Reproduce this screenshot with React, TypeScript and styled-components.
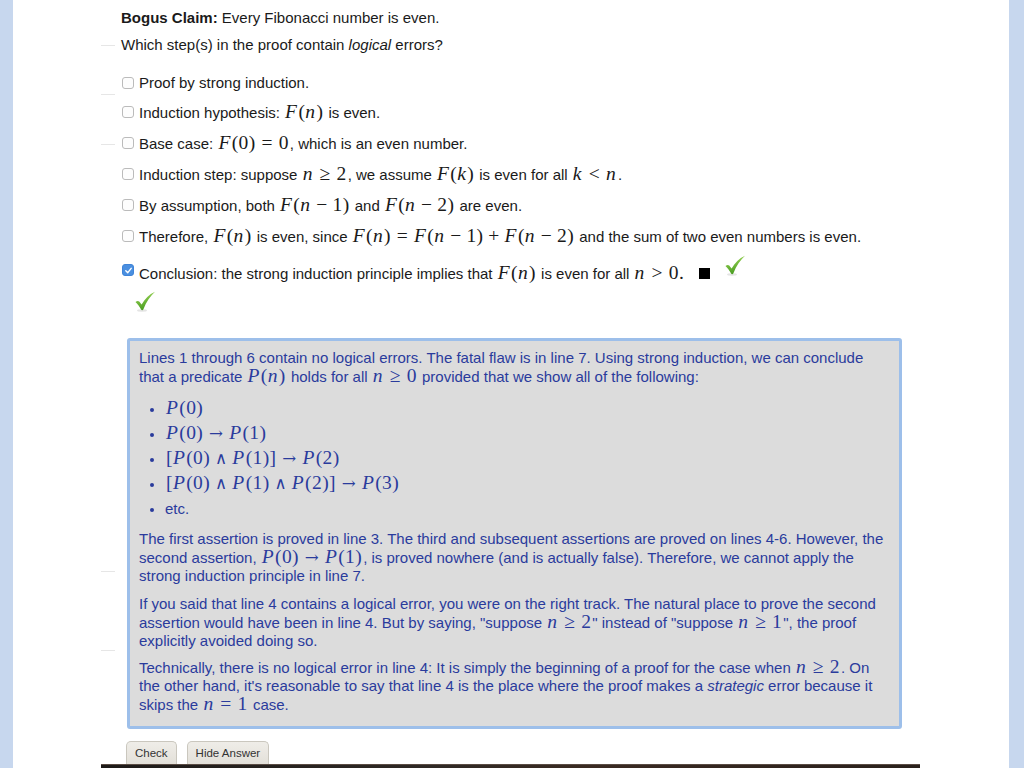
import styled, { createGlobalStyle, css } from "styled-components";
import { ReactNode } from "react";

const GlobalStyle = createGlobalStyle`
  html, body {
    margin: 0;
    padding: 0;
    background: #c7d7ee;
  }
  body {
    font-family: "Liberation Sans", Arial, sans-serif;
    font-size: 15px;
    color: #1a1a1a;
  }
`;

const Page = styled.div`
  margin: 0 15px 0 13px;
  min-height: 768px;
  background: #ffffff;
  padding-left: 88px;
  overflow: hidden;
  box-sizing: border-box;
`;

const Content = styled.div`
  padding-left: 20px;
  width: 790px;
`;

type Mark = { $mark?: [number, number] };

// faint tick marks in the left margin
const withMark = css<Mark>`
  position: relative;
  ${(p) =>
    p.$mark &&
    css`
      &::before {
        content: "";
        position: absolute;
        left: ${-p.$mark[0]}px;
        top: ${p.$mark[1]}px;
        width: 14px;
        border-top: 1px solid #e6e6e6;
      }
    `}
`;

const Claim = styled.p`
  margin: 0;
  padding-top: 8px;
  line-height: 20px;
`;

const Question = styled.p<Mark>`
  ${withMark}
  margin: 7px 0 0;
  line-height: 20px;
`;

const Options = styled.div`
  margin-top: 17px;
  display: flex;
  flex-direction: column;
  gap: 7px;
`;

const Option = styled.label<Mark & { $last?: boolean }>`
  ${withMark}
  display: flex;
  align-items: center;
  line-height: 21px;
  min-height: ${(p) => (p.$last ? 27 : 21)}px;
`;

const Box = styled.span<{ $checked?: boolean }>`
  flex: none;
  width: 12px;
  height: 12px;
  margin: 0 5px 0 1px;
  border-radius: 3px;
  box-sizing: border-box;
  display: inline-flex;
  align-items: center;
  justify-content: center;
  border: 1px solid ${(p) => (p.$checked ? "#3f84d8" : "#bbbbbb")};
  background: ${(p) => (p.$checked ? "#4a8fe0" : "#fdfdfd")};
`;

const M = styled.span`
  font-family: "Liberation Serif", "DejaVu Serif", serif;
  font-size: 1.3em;
  letter-spacing: 0.02em;
  line-height: 24px;
  white-space: nowrap;
  margin: 0 1px;
`;

const V = styled.i`
  font-style: italic;
  padding-right: 0.05em;
`;

const Bin = styled.span`
  margin: 0 0.25em;
`;

const Rel = styled.span`
  margin: 0 0.3em;
`;

const Sym = styled.span`
  font-family: "DejaVu Serif", serif;
  font-size: 0.85em;
  font-weight: 300;
`;

const Qed = styled.span`
  display: inline-block;
  width: 11px;
  height: 11px;
  background: #000;
  margin: 0 14px 0 14px;
`;

const Tick = styled.svg<{ $below?: boolean }>`
  flex: none;
  width: 22px;
  height: 21px;
  ${(p) =>
    p.$below
      ? css`
          display: block;
          margin: 6px 0 0 13px;
        `
      : css`
          vertical-align: 3px;
        `}
`;

const Answer = styled.div`
  margin: 26px 0 0 6px;
  width: 775px;
  box-sizing: border-box;
  border: 3px solid #9dbfea;
  border-radius: 3px;
  background: #dcdcdc;
  color: #2a3b9c;
  padding: 8px 9px 12px;
  line-height: 18px;
  ${M} {
    line-height: 0.9;
  }
`;

const Para = styled.p<Mark & { $gap?: number }>`
  ${withMark}
  margin: 0 0 ${(p) => p.$gap ?? 8}px;
  &:last-child {
    margin-bottom: 0;
  }
`;

const List = styled.ul`
  margin: 10px 0 9px;
  padding-left: 26px;
  list-style: disc;
  li {
    line-height: 25px;
  }
  li::marker {
    font-size: 13px;
  }
`;

const Buttons = styled.div`
  margin: 12px 0 0 5px;
  display: flex;
  gap: 10px;
`;

const Button = styled.button`
  height: 23px;
  padding: 0 8px;
  font-family: "Liberation Sans", Arial, sans-serif;
  font-size: 11.5px;
  color: #333;
  background: linear-gradient(#efede8, #e3e0d9);
  border: 1px solid #cac7be;
  border-bottom: none;
  border-radius: 5px 5px 0 0;
`;

const Film = styled.div`
  width: 819px;
  height: 20px;
  background: linear-gradient(90deg, #1d1a18 0%, #2f2925 40%, #3a2a22 60%, #2a211c 100%);
  border-top: 1px solid #5a4c44;
`;

const SmallCheck = () => (
  <svg width="9" height="9" viewBox="0 0 10 10">
    <path d="M2 5.2 L4.2 7.4 L8 2.6" fill="none" stroke="#fff" strokeWidth="1.6" strokeLinecap="round" strokeLinejoin="round" />
  </svg>
);

const GreenTick = ({ below }: { below?: boolean }) => (
  <Tick $below={below} viewBox="0 0 22 21">
    <defs>
      <linearGradient id={below ? "gb" : "ga"} x1="0" y1="0" x2="0.3" y2="1">
        <stop offset="0" stopColor="#a6dc5c" />
        <stop offset="1" stopColor="#4a9d22" />
      </linearGradient>
    </defs>
    <ellipse cx="8" cy="19.5" rx="5" ry="1.2" fill="#d9d9d9" opacity="0.7" />
    <path
      d="M1.5 11 C3 9.8 4.2 9.6 5.2 10.6 L7.6 13.6 C11 8 15 3.5 21 0.8 C16.5 5 12.2 11 9.3 18.5 C8.8 19.4 7.6 19.4 7.1 18.6 C5.6 15.8 3.8 13.2 1.5 11 Z"
      fill={`url(#${below ? "gb" : "ga"})`}
    />
  </Tick>
);

type Row = { checked?: boolean; mark?: [number, number]; body: ReactNode };

const Fn = ({ arg }: { arg: ReactNode }) => (
  <M>
    <V>F</V>({arg})
  </M>
);

const Arrow = () => (
  <Rel>
    <Sym>→</Sym>
  </Rel>
);

const And = () => (
  <Bin>
    <Sym>∧</Sym>
  </Bin>
);

const rows: Row[] = [
  { mark: [20, 22], body: "Proof by strong induction." },
  {
    body: (
      <>
        Induction hypothesis:&nbsp;<Fn arg={<V>n</V>} />&nbsp;is even.
      </>
    ),
  },
  {
    mark: [20, 13],
    body: (
      <>
        Base case:&nbsp;
        <M>
          <V>F</V>(0)<Rel>=</Rel>0
        </M>
        , which is an even number.
      </>
    ),
  },
  {
    body: (
      <>
        Induction step: suppose&nbsp;
        <M>
          <V>n</V>
          <Rel>≥</Rel>2
        </M>
        , we assume&nbsp;<Fn arg={<V>k</V>} />&nbsp;is even for all&nbsp;
        <M>
          <V>k</V>
          <Rel>&lt;</Rel>
          <V>n</V>
        </M>
        .
      </>
    ),
  },
  {
    body: (
      <>
        By assumption, both&nbsp;
        <Fn
          arg={
            <>
              <V>n</V>
              <Bin>−</Bin>1
            </>
          }
        />
        &nbsp;and&nbsp;
        <Fn
          arg={
            <>
              <V>n</V>
              <Bin>−</Bin>2
            </>
          }
        />
        &nbsp;are even.
      </>
    ),
  },
  {
    body: (
      <>
        Therefore,&nbsp;<Fn arg={<V>n</V>} />&nbsp;is even, since&nbsp;
        <M>
          <V>F</V>(<V>n</V>)<Rel>=</Rel>
          <V>F</V>(<V>n</V>
          <Bin>−</Bin>1)<Bin>+</Bin>
          <V>F</V>(<V>n</V>
          <Bin>−</Bin>2)
        </M>
        &nbsp;and the sum of two even numbers is even.
      </>
    ),
  },
  {
    checked: true,
    body: (
      <>
        Conclusion: the strong induction principle implies that&nbsp;
        <Fn arg={<V>n</V>} />
        &nbsp;is even for all&nbsp;
        <M>
          <V>n</V>
          <Rel>&gt;</Rel>0.
        </M>
        <Qed />
        <GreenTick />
      </>
    ),
  },
];

const P = ({ n }: { n: number | string | ReactNode }) => (
  <>
    <V>P</V>({n})
  </>
);

export default function App() {
  return (
    <>
      <GlobalStyle />
      <Page>
        <Content>
          <Claim>
            <b>Bogus Claim:</b> Every Fibonacci number is even.
          </Claim>
          <Question $mark={[20, 10]}>
            Which step(s) in the proof contain <i>logical</i> errors?
          </Question>
          <Options>
            {rows.map((r, i) => (
              <Option key={i} $mark={r.mark} $last={i === rows.length - 1}>
                <Box $checked={r.checked}>{r.checked && <SmallCheck />}</Box>
                <span>{r.body}</span>
              </Option>
            ))}
          </Options>
          <GreenTick below />
          <Answer>
            <Para>
              Lines 1 through 6 contain no logical errors. The fatal flaw is in line 7. Using strong induction, we can
              conclude that a predicate{" "}
              <M>
                <P n={<V>n</V>} />
              </M>{" "}
              holds for all{" "}
              <M>
                <V>n</V>
                <Rel>≥</Rel>0
              </M>{" "}
              provided that we show all of the following:
            </Para>
            <List>
              <li>
                <M>
                  <P n={0} />
                </M>
              </li>
              <li>
                <M>
                  <P n={0} />
                  <Arrow />
                  <P n={1} />
                </M>
              </li>
              <li>
                <M>
                  [<P n={0} />
                  <And />
                  <P n={1} />]<Arrow />
                  <P n={2} />
                </M>
              </li>
              <li>
                <M>
                  [<P n={0} />
                  <And />
                  <P n={1} />
                  <And />
                  <P n={2} />]<Arrow />
                  <P n={3} />
                </M>
              </li>
              <li>etc.</li>
            </List>
            <Para $mark={[38, 41]} $gap={10}>
              The first assertion is proved in line 3. The third and subsequent assertions are proved on lines 4-6.
              However, the second assertion,{" "}
              <M>
                <P n={0} />
                <Arrow />
                <P n={1} />
              </M>
              , is proved nowhere (and is actually false). Therefore, we cannot apply the strong induction principle in
              line 7.
            </Para>
            <Para $mark={[38, 55]}>
              If you said that line 4 contains a logical error, you were on the right track. The natural place to prove
              the second assertion would have been in line 4. But by saying, "suppose{" "}
              <M>
                <V>n</V>
                <Rel>≥</Rel>2
              </M>
              " instead of "suppose{" "}
              <M>
                <V>n</V>
                <Rel>≥</Rel>1
              </M>
              ", the proof explicitly avoided doing so.
            </Para>
            <Para>
              Technically, there is no logical error in line 4: It is simply the beginning of a proof for the case when{" "}
              <M>
                <V>n</V>
                <Rel>≥</Rel>2
              </M>
              . On the other hand, it's reasonable to say that line 4 is the place where the proof makes a{" "}
              <i>strategic</i> error because it skips the{" "}
              <M>
                <V>n</V>
                <Rel>=</Rel>1
              </M>{" "}
              case.
            </Para>
          </Answer>
          <Buttons>
            <Button>Check</Button>
            <Button>Hide Answer</Button>
          </Buttons>
        </Content>
        <Film />
      </Page>
    </>
  );
}
